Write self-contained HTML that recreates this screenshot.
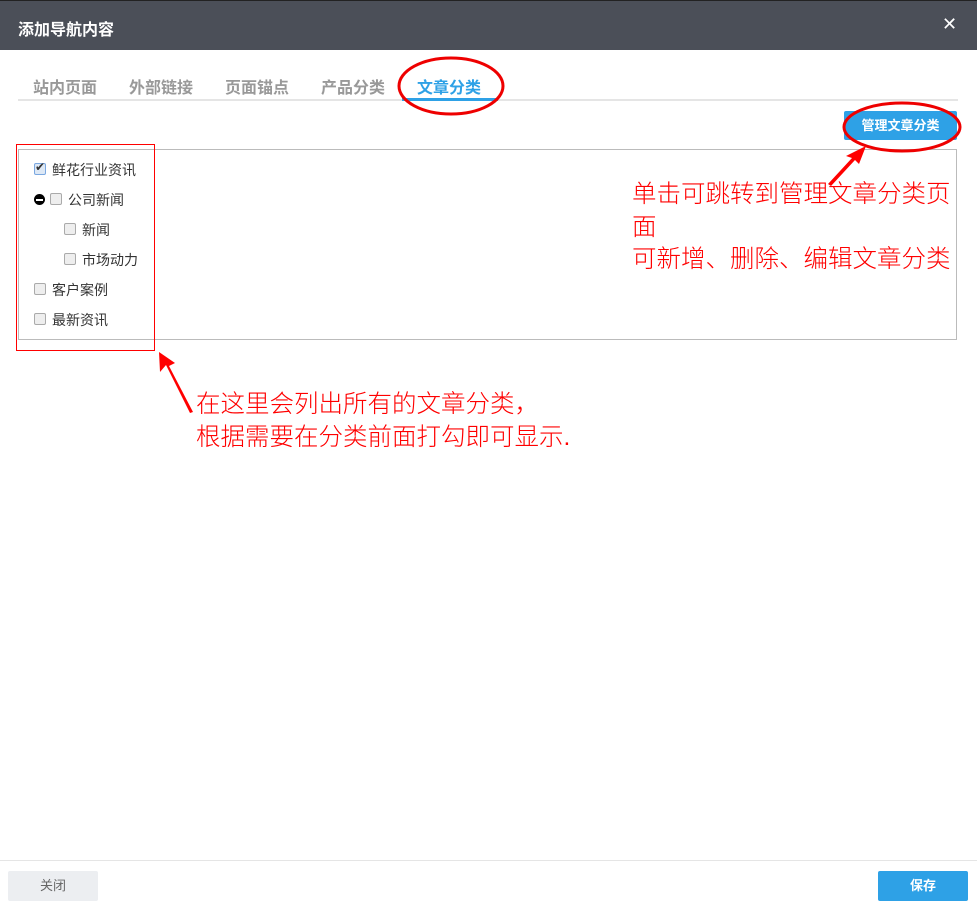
<!DOCTYPE html>
<html><head><meta charset="utf-8"><style>
body{margin:0;width:977px;height:909px;background:#fff;position:relative;overflow:hidden;font-family:"Liberation Sans","Noto Sans CJK SC",sans-serif;}
.hd{position:absolute;left:0;top:0;width:977px;height:50px;background:#4b4f58;border-top:1px solid #222;box-sizing:border-box}
.hd .t{position:absolute;left:18px;top:15px;color:#fff;font-size:16px;font-weight:bold}
.hd .x{position:absolute;left:942px;top:13px;color:#fff;font-size:18px}
.tab{position:absolute;top:74px;font-size:16px;font-weight:bold;color:#999}
.line{position:absolute;left:18px;top:99px;width:940px;height:2px;background:#e5e5e5}
.act{position:absolute;left:402px;top:98px;width:96px;height:3px;background:#2ea1e6}
.btn{position:absolute;left:844px;top:111px;width:113px;height:29px;background:#2ea1e6;color:#fff;font-size:13px;font-weight:bold;text-align:center;line-height:29px;border-radius:2px}
.box{position:absolute;left:18px;top:149px;width:939px;height:191px;border:1px solid #bbb;box-sizing:border-box}
.it{position:absolute;font-size:14px;color:#333}
.cb{position:absolute;width:12px;height:12px;border:1px solid #aaa;border-radius:2px;background:#eee;box-sizing:border-box}
.red{color:#f00;font-size:24.5px;position:absolute;line-height:32.5px;font-weight:300;white-space:nowrap}
.ft{position:absolute;left:0;top:860px;width:977px;height:1px;background:#e5e5e5}
</style></head><body>
<div class="hd"><div class="t">添加导航内容</div><div class="x">✕</div></div>
<div class="tab" style="left:33px">站内页面</div>
<div class="tab" style="left:129px">外部链接</div>
<div class="tab" style="left:225px">页面锚点</div>
<div class="tab" style="left:321px">产品分类</div>
<div class="tab" style="left:417px;color:#2ea1e6">文章分类</div>
<div class="line"></div><div class="act"></div>
<div class="btn">管理文章分类</div>
<div class="box"></div>
<div class="cb" style="left:34px;top:163px;border-color:#7aa7e0;background:#dde8f5"></div><div class="it" style="left:35px;top:160px;font-size:12px">✔</div>
<div class="it" style="left:52px;top:160px">鲜花行业资讯</div>
<div style="position:absolute;left:34px;top:194px;width:11px;height:11px;border-radius:50%;background:#000"></div><div style="position:absolute;left:36px;top:199px;width:7px;height:2px;background:#fff"></div>
<div class="cb" style="left:50px;top:193px"></div><div class="it" style="left:68px;top:190px">公司新闻</div>
<div class="cb" style="left:64px;top:223px"></div><div class="it" style="left:82px;top:220px">新闻</div>
<div class="cb" style="left:64px;top:253px"></div><div class="it" style="left:82px;top:250px">市场动力</div>
<div class="cb" style="left:34px;top:283px"></div><div class="it" style="left:52px;top:280px">客户案例</div>
<div class="cb" style="left:34px;top:313px"></div><div class="it" style="left:52px;top:310px">最新资讯</div>
<div style="position:absolute;left:16px;top:144px;width:139px;height:207px;border:1px solid #f00;box-sizing:border-box"></div>
<svg style="position:absolute;left:0;top:0" width="977" height="909">
<ellipse cx="451" cy="86" rx="52" ry="28" fill="none" stroke="#e00" stroke-width="3"/>
<ellipse cx="902" cy="127" rx="58" ry="24" fill="none" stroke="#e00" stroke-width="3"/>
<path d="M190 413 L166 365 L160 372 L159 352 L175 363 L169 366 L193 412Z" fill="#f00"/>
<path d="M828 184 L852 158 L846 156 L866 146 L859 164 L855 160 L831 186Z" fill="#f00"/>
</svg>
<div class="red" style="left:632px;top:179px">单击可跳转到管理文章分类页<br>面<br>可新增、删除、编辑文章分类</div>
<div class="red" style="left:196px;top:389px">在这里会列出所有的文章分类，<br>根据需要在分类前面打勾即可显示.</div>
<div class="ft"></div>
<div style="position:absolute;left:8px;top:871px;width:90px;height:30px;background:#eceef1;color:#666;font-size:13px;text-align:center;line-height:30px;border-radius:2px">关闭</div>
<div style="position:absolute;left:878px;top:871px;width:90px;height:30px;background:#2ea1e6;color:#fff;font-size:13px;font-weight:bold;text-align:center;line-height:30px;border-radius:2px">保存</div>
</body></html>
